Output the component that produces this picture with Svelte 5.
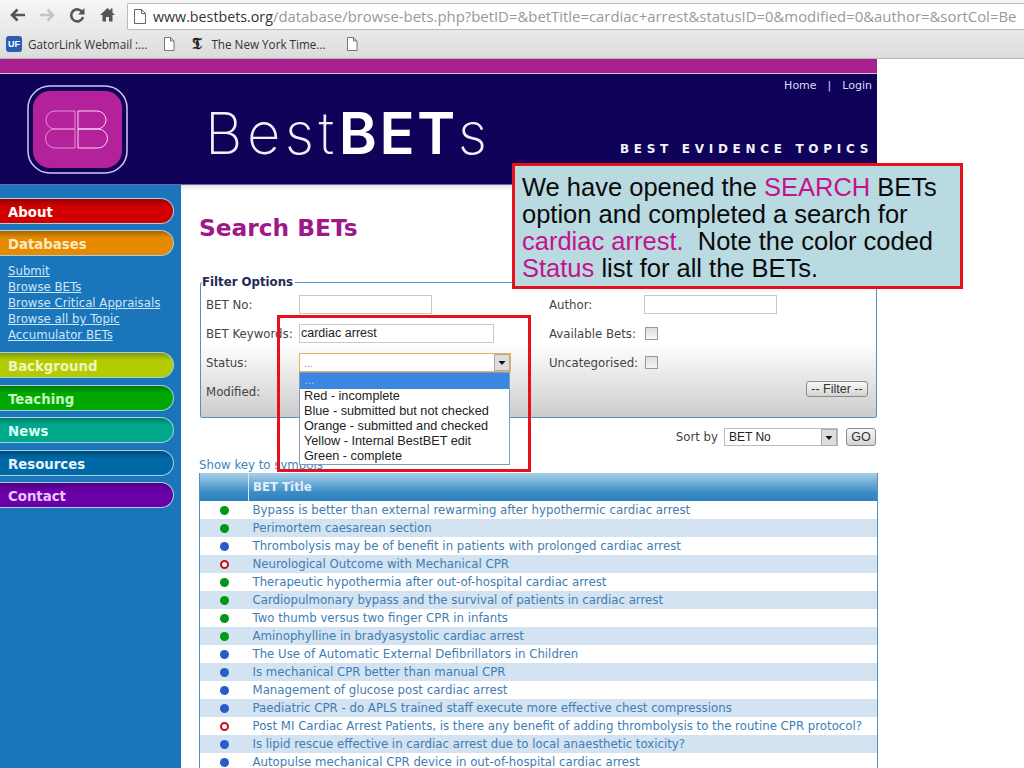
<script>
	const nav1 = [
		{ label: 'About', cls: 'about' },
		{ label: 'Databases', cls: 'databases' }
	];
	const nav2 = [
		{ label: 'Background', cls: 'background' },
		{ label: 'Teaching', cls: 'teaching' },
		{ label: 'News', cls: 'news' },
		{ label: 'Resources', cls: 'resources' },
		{ label: 'Contact', cls: 'contact' }
	];
	const subLinks = ['Submit', 'Browse BETs', 'Browse Critical Appraisals', 'Browse all by Topic', 'Accumulator BETs'];
	const statuses = ['Red - incomplete', 'Blue - submitted but not checked', 'Orange - submitted and checked', 'Yellow - Internal BestBET edit', 'Green - complete'];

	// g = complete, b = submitted, r = incomplete
	const bets = [
		['g', 'Bypass is better than external rewarming after hypothermic cardiac arrest'],
		['g', 'Perimortem caesarean section'],
		['b', 'Thrombolysis may be of benefit in patients with prolonged cardiac arrest'],
		['r', 'Neurological Outcome with Mechanical CPR'],
		['g', 'Therapeutic hypothermia after out-of-hospital cardiac arrest'],
		['g', 'Cardiopulmonary bypass and the survival of patients in cardiac arrest'],
		['g', 'Two thumb versus two finger CPR in infants'],
		['g', 'Aminophylline in bradyasystolic cardiac arrest'],
		['b', 'The Use of Automatic External Defibrillators in Children'],
		['b', 'Is mechanical CPR better than manual CPR'],
		['b', 'Management of glucose post cardiac arrest'],
		['b', 'Paediatric CPR - do APLS trained staff execute more effective chest compressions'],
		['r', 'Post MI Cardiac Arrest Patients, is there any benefit of adding thrombolysis to the routine CPR protocol?'],
		['b', 'Is lipid rescue effective in cardiac arrest due to local anaesthetic toxicity?'],
		['b', 'Autopulse mechanical CPR device in out-of-hospital cardiac arrest']
	];
</script>

{#snippet docIcon()}
	<svg class="doc" width="12" height="14" viewBox="0 0 12 14">
		<path d="M1.5 .5h6l3.5 3.5v9.5h-9.5z M7.5 .5v3.5h3.5" fill="#fff" stroke="#777" stroke-width="1" />
	</svg>
{/snippet}

{#snippet arrowBtn()}
	<svg class="select-arrow" width="16" height="17" viewBox="0 0 16 17">
		<rect x=".5" y=".5" width="15" height="16" fill="#ddd" stroke="#aaa" />
		<path d="M4.500 7h7l-3.500 4z" fill="#111" />
	</svg>
{/snippet}

<div class="app">
	<header class="chrome">
		<div class="toolbar">
			<div class="nav-icons">
				<svg width="17" height="14" viewBox="0 0 17 14"><path d="M16 7H4M8.500 1.500 3 7l5.500 5.500" fill="none" stroke="#555" stroke-width="2.600" /></svg>
				<svg width="17" height="14" viewBox="0 0 17 14"><path d="M1 7h12M8.500 1.500 14 7l-5.500 5.500" fill="none" stroke="#c4c4c4" stroke-width="2.600" /></svg>
				<svg width="16" height="16" viewBox="0 0 16 16"><path d="M13.500 5.500A6 6 0 1 0 14 10" fill="none" stroke="#555" stroke-width="2.600" /><path d="M15.500 1v6.500H9z" fill="#555" /></svg>
				<svg class="home" width="15" height="15" viewBox="0 0 15 15"><path d="M7.500 1 0 8h2.500v6.500h3.500V10h3v4.500h3.500V8H15l-2.500-2.300V1.500h-2v2.300z" fill="#555" /></svg>
			</div>
			<div class="address">
				<svg class="doc" width="12" height="15" viewBox="0 0 12 15"><path d="M.5 .5h7l4 4v10h-11z M7.500 .5v4h4" fill="#fff" stroke="#666" /></svg>
				<span class="url"><b>www.bestbets.org</b>/database/browse-bets.php?betID=&amp;betTitle=cardiac+arrest&amp;statusID=0&amp;modified=0&amp;author=&amp;sortCol=Be</span>
			</div>
		</div>
		<div class="bookmarks">
			<span class="uf">UF</span>
			<span class="mark gator">GatorLink Webmail :...</span>
			{@render docIcon()}
			<span class="nyt">𝕿</span>
			<span class="mark times">The New York Time...</span>
			{@render docIcon()}
		</div>
	</header>

	<div class="site">
		<div class="stripe"></div>
		<div class="banner">
			<svg class="logo" width="102" height="89" viewBox="0 0 102 89">
				<rect x="1" y="1" width="99" height="87" rx="22" fill="none" stroke="#d9c4f0" stroke-width="1.500" />
				<rect x="6" y="6" width="89" height="77" rx="17" fill="#b3229a" />
				<g fill="none" stroke-width="1">
					<g stroke="#e58fd8">
						<path d="M48 26H28a9 9 0 0 0 0 18h20zM48 44H28a9.500 9.500 0 0 0 0 19h20z" />
					</g>
					<g stroke="#fbd5f5">
						<path d="M51 26h19a9 9 0 0 1 0 18H51zM51 44h20a9.500 9.500 0 0 1 0 19H51z" />
					</g>
				</g>
			</svg>
			<div class="wordmark">Best<b>BET</b>s</div>
			<div class="top-links">Home<i>|</i>Login</div>
			<div class="tagline">BEST EVIDENCE TOPICS</div>
		</div>

		<div class="body">
			<aside class="side">
				{#each nav1 as item}
					<div class="pill {item.cls}">{item.label}</div>
				{/each}
				<ul class="sublinks">
					{#each subLinks as link}
						<li>{link}</li>
					{/each}
				</ul>
				{#each nav2 as item}
					<div class="pill lower {item.cls}">{item.label}</div>
				{/each}
			</aside>

			<main class="content">
				<h1>Search BETs</h1>
				<fieldset>
					<legend>Filter Options</legend>
					<div class="filter">
						<div class="field"><span class="lbl">BET No:</span><span class="input short"></span></div>
						<div class="field"><span class="lbl wide">Author:</span><span class="input short"></span></div>

						<div class="field"><span class="lbl">BET Keywords:</span><span class="input long">cardiac arrest</span></div>
						<div class="field"><span class="lbl wide">Available Bets:</span><span class="check"></span></div>

						<div class="field status">
							<span class="lbl">Status:</span>
							<div class="select-wrap">
								<div class="select open"><span>...</span>{@render arrowBtn()}</div>
								<ul class="options">
									<li class="picked">...</li>
									{#each statuses as s}
										<li>{s}</li>
									{/each}
								</ul>
							</div>
						</div>
						<div class="field"><span class="lbl wide">Uncategorised:</span><span class="check"></span></div>

						<div class="field"><span class="lbl">Modified:</span></div>
						<div class="field end"><span class="btn filter-btn">-- Filter --</span></div>
					</div>
				</fieldset>

				<div class="sort">
					<span class="sort-lbl">Sort by</span>
					<div class="select sort-select"><span>BET No</span>{@render arrowBtn()}</div>
					<span class="btn go">GO</span>
				</div>

				<div class="key">Show key to symbols</div>

				<table>
					<thead>
						<tr><th class="ico"></th><th>BET Title</th></tr>
					</thead>
					<tbody>
						{#each bets as [status, title]}
							<tr>
								<td class="ico"><span class="dot {status}"></span></td>
								<td>{title}</td>
							</tr>
						{/each}
					</tbody>
				</table>
			</main>
		</div>
	</div>

	<div class="callout">
		We have opened the <em>SEARCH</em> BETs option and completed a search for <em>cardiac arrest.</em>&nbsp; Note the color coded <em>Status</em> list for all the BETs.
	</div>
	<div class="highlight"></div>
</div>

<style>
	:global(body) {
		margin: 0;
		background: #fff;
	}

	.app {
		position: relative;
		width: 1024px;
		height: 768px;
		overflow: hidden;
		font-family: "DejaVu Sans", Verdana, sans-serif;
		font-size: 11.750px;
		color: #444;
	}

	/* browser chrome */
	.chrome {
		height: 58px;
		background: linear-gradient(#f6f6f6, #dcdcdc);
		border-bottom: 1px solid #b5b5b5;
		font-family: "Open Sans", sans-serif;
	}

	.toolbar {
		display: flex;
		align-items: center;
		height: 29px;
		padding-left: 9px;
	}

	.nav-icons {
		display: flex;
		align-items: center;
		gap: 13px;
		width: 118px;
	}

	.home {
		margin-left: 2px;
	}

	.doc {
		flex: none;
	}

	.address {
		flex: 1;
		display: flex;
		align-items: center;
		gap: 7px;
		min-width: 0;
		height: 25px;
		margin-top: 3px;
		padding-left: 6px;
		background: #fff;
		border: 1px solid #bbb;
		border-right: none;
		border-radius: 2px 0 0 2px;
		overflow: hidden;
	}

	.url {
		flex: none;
		font-size: 14.900px;
		color: #999;
		white-space: nowrap;
	}

	.url b {
		font-size: 14.250px;
		font-weight: 400;
		color: #333;
	}

	.bookmarks {
		display: flex;
		align-items: center;
		height: 29px;
		padding-left: 6px;
	}

	.uf {
		width: 16px;
		height: 16px;
		border-radius: 3px;
		background: #2a5bb5;
		color: #fff;
		font: bold 9px/16px "Liberation Sans", sans-serif;
		text-align: center;
	}

	.mark {
		font-size: 11.700px;
		color: #333;
		white-space: nowrap;
	}

	.gator {
		margin: 0 16px 0 6px;
	}

	.nyt {
		margin: 0 7px 0 17px;
		width: 12px;
		font: bold 16px/1 "DejaVu Serif", serif;
		color: #222;
	}

	.times {
		margin-right: 20px;
	}

	/* site header */
	.site {
		width: 877px;
	}

	.stripe {
		height: 14px;
		background: #a81f8e;
		border-bottom: 1px solid #d9b6e6;
	}

	.banner {
		position: relative;
		display: flex;
		height: 110px;
		background: #0f0259;
		border-bottom: 1px solid #6a6aa8;
	}

	.logo {
		margin: 11px 0 0 27px;
	}

	.wordmark {
		margin: 23px 0 0 76px;
		font-family: Inter, "Liberation Sans", sans-serif;
		font-size: 58px;
		font-weight: 200;
		line-height: 72px;
		letter-spacing: 4.500px;
		white-space: nowrap;
		color: #f2f0fa;
	}

	.wordmark b {
		font-weight: 600;
		letter-spacing: 2.500px;
		color: #fff;
	}

	.top-links {
		position: absolute;
		top: 5px;
		right: 5px;
		font-size: 11px;
		color: #dcdcf2;
	}

	.top-links i {
		padding: 0 11px;
		font-style: normal;
	}

	.tagline {
		position: absolute;
		right: 4px;
		top: 68px;
		font: bold 12px "DejaVu Sans", sans-serif;
		letter-spacing: 4.700px;
		white-space: nowrap;
		color: #f2f2f8;
	}

	/* sidebar */
	.body {
		display: flex;
		height: 584px;
	}

	.side {
		flex: none;
		width: 181px;
		padding-top: 13px;
		background: #1a75bb;
		box-sizing: border-box;
	}

	.pill {
		box-sizing: border-box;
		width: 174px;
		height: 26px;
		margin-bottom: 6px;
		padding-left: 8px;
		font-size: 13.300px;
		font-weight: 700;
		line-height: 27px;
		border: 1px solid #a9cfe0;
		border-left: none;
		border-radius: 0 14px 14px 0;
	}

	.pill.lower {
		margin-bottom: 6.500px;
	}

	.about { background: linear-gradient(#980000, #d00000 30%); color: #fff; }
	.databases { background: linear-gradient(#a86600, #e68a00 30%); color: #fde9c0; }
	.background { background: linear-gradient(#84980a, #b3cc00 30%); color: #eef5c0; }
	.teaching { background: linear-gradient(#007a00, #00a800 30%); color: #c4f7c0; }
	.news { background: linear-gradient(#007e68, #00a88c 30%); color: #d8fff2; }
	.resources { background: linear-gradient(#004c7c, #0068a4 30%); color: #e8f4ff; }
	.contact { background: linear-gradient(#4c0080, #6a00a8 30%); color: #f0c4ff; }

	.sublinks {
		list-style: none;
		margin: 0 0 9px;
		padding: 1px 0 0 8px;
		line-height: 16px;
		color: #cfe6f7;
		text-decoration: underline;
	}

	/* main column */
	.content {
		flex: 1;
		padding-left: 18px;
		background: linear-gradient(#e4e4e4, #fff 6px);
	}

	h1 {
		margin: 0;
		padding-top: 30px;
		font-size: 23.300px;
		line-height: 26px;
		color: #a0178a;
	}

	fieldset {
		box-sizing: border-box;
		width: 677px;
		height: 142px;
		margin: 35px 0 0 1px;
		padding: 0;
		border: 1px solid #4f93c6;
		border-radius: 2px;
		background: linear-gradient(#fff 45%, #ccc);
	}

	legend {
		margin-left: 1px;
		padding: 0 2px 0 0;
		font-weight: 700;
		line-height: 13px;
		color: #1f2a55;
	}

	.filter {
		display: grid;
		grid-template-columns: 343px 1fr;
		grid-auto-rows: 29px;
		padding: 1px 8px 0 5px;
	}

	.field {
		display: flex;
		align-items: center;
		min-width: 0;
	}

	.field.end {
		justify-content: flex-end;
		align-items: flex-start;
		padding-top: 4px;
	}

	.lbl {
		flex: none;
		width: 93px;
		white-space: nowrap;
	}

	.lbl.wide {
		width: 95px;
	}

	.input {
		box-sizing: border-box;
		height: 19px;
		padding-left: 1px;
		background: #fff;
		border: 1px solid #c8c8c8;
		font: 12.500px/17px "Liberation Sans", sans-serif;
		color: #222;
	}

	.short { width: 133px; }
	.long { width: 195px; }

	.check {
		width: 13px;
		height: 13px;
		margin: 0 0 1px 1px;
		box-sizing: border-box;
		background: linear-gradient(#ddd, #f6f6f6);
		border: 1px solid #999;
	}

	.select-wrap {
		position: relative;
		width: 212px;
	}

	.select {
		box-sizing: border-box;
		display: flex;
		align-items: center;
		justify-content: space-between;
		height: 19px;
		padding-left: 4px;
		background: #fff;
		border: 1px solid #bbb;
		font: 11px "Liberation Sans", sans-serif;
		color: #888;
	}

	.select.open {
		border-color: #e3b35c;
	}

	.options {
		position: absolute;
		left: 0;
		top: 19px;
		box-sizing: border-box;
		width: 211px;
		margin: 0;
		padding: 0;
		list-style: none;
		background: #fff;
		border: 1px solid #7f9db9;
		font: 12.700px/15px "Liberation Sans", sans-serif;
		color: #222;
	}

	.options li {
		padding-left: 4px;
		height: 15px;
		white-space: nowrap;
	}

	.options .picked {
		height: 16px;
		background: #3a86e0;
		color: #a8c8ee;
	}

	.btn {
		box-sizing: border-box;
		display: block;
		background: linear-gradient(#f8f8f8, #d4d4d4);
		border: 1px solid #8a8a8a;
		border-radius: 3px;
		font: 12.500px/14px "Liberation Sans", sans-serif;
		color: #333;
		text-align: center;
	}

	.filter-btn {
		width: 62px;
		height: 16px;
	}

	.sort {
		display: flex;
		align-items: center;
		justify-content: flex-end;
		width: 677px;
		height: 18px;
		margin-top: 10px;
	}

	.sort-lbl {
		margin-right: 6px;
	}

	.sort-select {
		width: 114px;
		height: 18px;
		margin-right: 8px;
		font-size: 12px;
		color: #222;
		padding-left: 4px;
	}

	.go {
		width: 30px;
		height: 18px;
		font-size: 12.500px;
		line-height: 16px;
	}

	.key {
		margin-top: 12px;
		line-height: 14px;
		color: #3f86b8;
	}

	table {
		width: 679px;
		margin-top: 1px;
		border-collapse: collapse;
		table-layout: fixed;
		border-left: 1px solid #4f93c6;
		border-right: 1px solid #4f93c6;
	}

	th {
		height: 28px;
		padding: 0 0 0 4px;
		text-align: left;
		color: #e3eef8;
		background: linear-gradient(#a9cfe8, #3a8cc6 70%, #2f80bf);
	}

	th.ico {
		border-right: 1px solid #d8e8f4;
	}

	td {
		box-sizing: border-box;
		height: 18px;
		padding: 1px 0 0 4px;
		color: #3f7db5;
		white-space: nowrap;
		overflow: visible;
		line-height: 17px;
	}

	.ico {
		width: 48px;
		padding: 0;
		text-align: center;
	}

	tbody tr:nth-child(even) td {
		background: #d3e3f1;
	}

	.dot {
		display: inline-block;
		box-sizing: border-box;
		width: 9px;
		height: 9px;
		border-radius: 50%;
		vertical-align: -1px;
	}

	.dot.g { background: #009a1a; }
	.dot.b { background: #2a5cc8; }
	.dot.r { background: #fff; border: 2px solid #c40f1e; }

	/* slide annotations over the page */
	.callout {
		position: absolute;
		left: 512px;
		top: 163px;
		box-sizing: border-box;
		width: 451px;
		height: 126px;
		padding: 8px 7px 6px;
		background: #b8dae0;
		border: 3px solid #e8101c;
		font: 25.500px/27px "Liberation Sans", sans-serif;
		color: #0a0a0a;
	}

	.callout em {
		font-style: normal;
		color: #c4128f;
	}

	.highlight {
		position: absolute;
		left: 277px;
		top: 315px;
		box-sizing: border-box;
		width: 254px;
		height: 157px;
		border: 3px solid #e8101c;
	}
</style>
